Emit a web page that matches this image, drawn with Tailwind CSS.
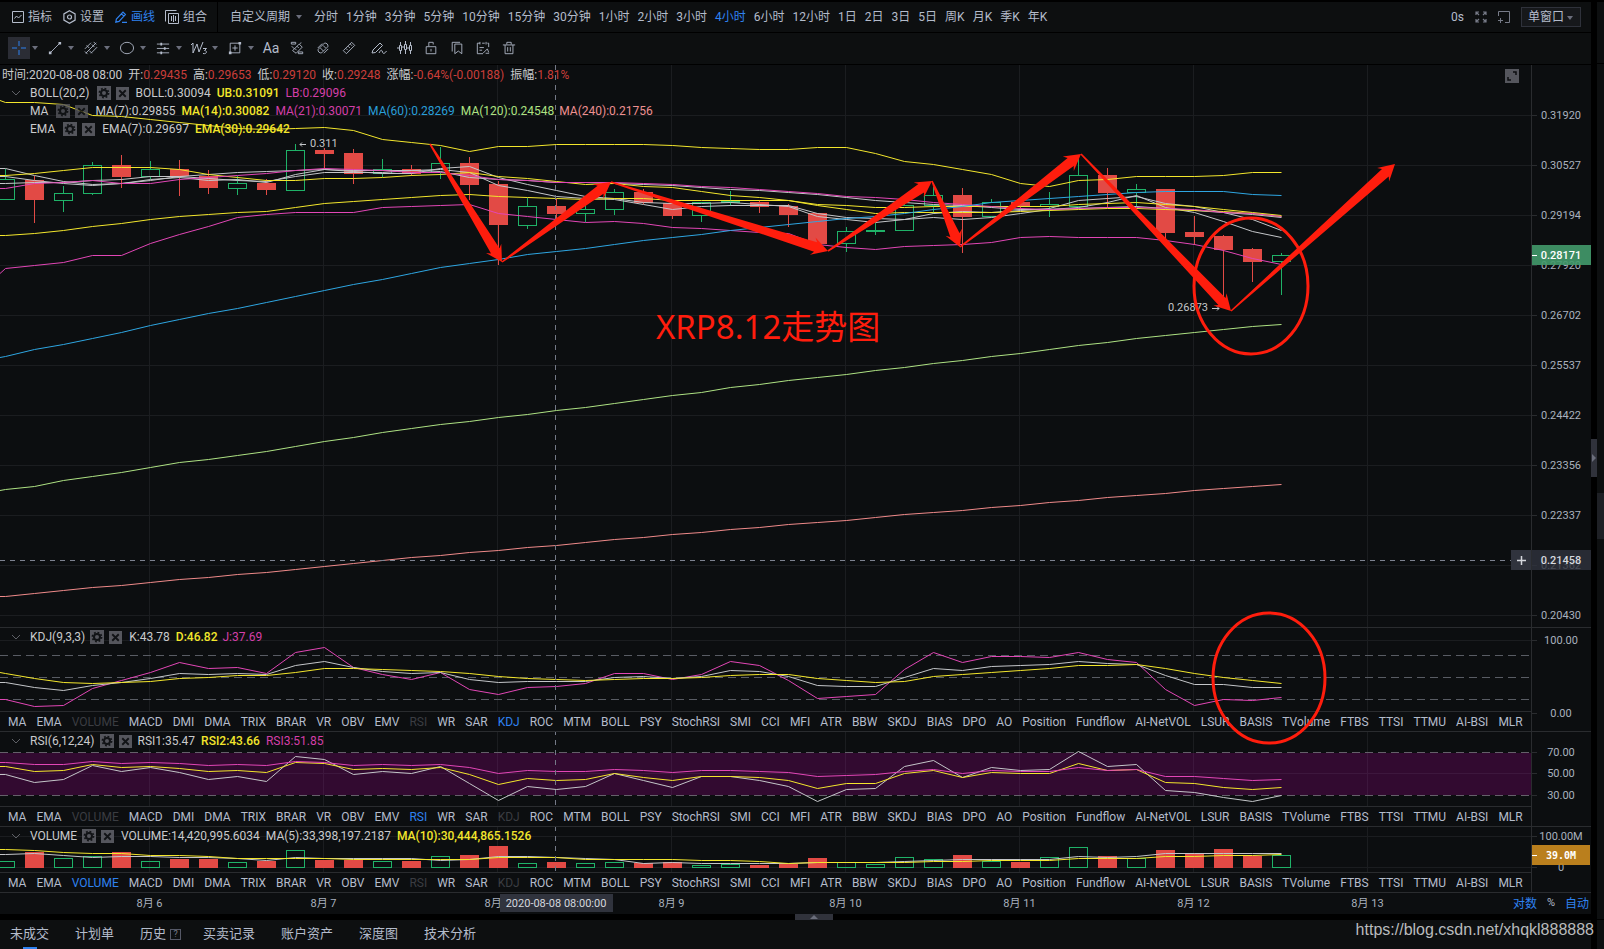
<!DOCTYPE html>
<html lang="zh-CN">
<head>
<meta charset="utf-8">
<title>XRP K线图</title>
<script src="https://cdn.jsdelivr.net/npm/@tailwindcss/browser@4"></script>
</head>
<body class="bg-black">
<svg width="0" height="0" class="absolute" aria-hidden="true">
  <defs>
    <symbol id="gear" viewBox="0 0 14 14"><rect width="14" height="14" fill="#55565d"/><g fill="none" stroke="#111316"><circle cx="7" cy="7" r="3" stroke-width="2"/><circle cx="7" cy="7" r="4.6" stroke-width="1.6" stroke-dasharray="1.8 1.8"/></g></symbol>
    <symbol id="cross" viewBox="0 0 14 14"><rect width="14" height="14" fill="#55565d"/><path d="M3.5 3.5l7 7M10.5 3.5l-7 7" stroke="#111316" stroke-width="2" fill="none"/></symbol>
    <symbol id="chev" viewBox="0 0 10 6"><path d="M1 1l4 4 4-4" fill="none" stroke="#5e6066"/></symbol>
    <symbol id="down" viewBox="0 0 6 4"><path d="M0 0h6l-3 4z" fill="#6b6e7c"/></symbol>
  </defs>
</svg>

<div class="relative flex h-screen min-h-[949px] w-full gap-[6px] overflow-hidden bg-black font-[Roboto,'Noto_Sans_CJK_SC',sans-serif] text-xs text-[#b4bccb]">

  <div class="flex min-w-0 flex-1 flex-col pt-[2px]">
    <!-- period bar -->
    <header class="flex h-[30px] shrink-0 items-stretch bg-[#0d0f10]">
      <div class="flex items-center gap-[11px] border-r border-black pl-3 pr-[10px] whitespace-nowrap">
        <button class="flex items-center gap-1"><svg class="size-3" viewBox="0 0 12 12" fill="none" stroke="currentColor"><path d="M.5.5h11v11H.5zM2.500 7.500l2-2.500 2 2 3-3"/></svg>指标</button>
        <button class="flex items-center gap-1"><svg class="h-[14px] w-[13px]" viewBox="0 0 13 14" fill="none" stroke="currentColor" stroke-width="1.200"><path d="M6.500.7l5.600 3.200v6.200L6.500 13.300.9 10.100V3.900z"/><circle cx="6.500" cy="7" r="2"/></svg>设置</button>
        <button class="flex items-center gap-1 text-[#2f82f0]"><svg class="size-3" viewBox="0 0 12 12" fill="none" stroke="currentColor" stroke-width="1.200"><path d="M.8 11.200l.6-3.200L8 1.200l2.400 2.400L4 10.400zM6.500 2.800l2.400 2.400M7 11.400h5"/></svg>画线</button>
        <button class="-ml-px flex items-center gap-1"><svg class="size-[14px]" viewBox="0 0 14 14" fill="none" stroke="currentColor"><path d="M.5 11.500v-11h11M3.500 3.500h10v10h-10zM6.500 6v5M8.500 5v7M10.500 6v5"/></svg>组合</button>
      </div>
      <nav id="periods" class="flex min-w-0 flex-1 items-center gap-2 overflow-hidden pl-3 whitespace-nowrap">
        <button class="flex items-center gap-[6px] pr-1">自定义周期<svg class="h-1 w-[6px]"><use href="#down"/></svg></button>
      </nav>
      <div class="flex items-center gap-[11px] pr-[10px] whitespace-nowrap">
        <span>0s</span>
        <button aria-label="全屏"><svg class="size-3" viewBox="0 0 12 12" fill="none" stroke="#777b88" stroke-width="1.200"><path d="M1 4V1h3M1 1l3 3M8 1h3v3M11 1L8 4M1 8v3h3M1 11l3-3M11 8v3H8M11 11L8 8"/></svg></button>
        <button aria-label="新窗口"><svg class="size-3" viewBox="0 0 12 12" fill="none" stroke="#777b88"><path d="M.5 5V.5h11v11H7M2.500 7v5M0 9.500h5"/></svg></button>
        <div class="relative">
          <label for="win" class="sr-only">窗口</label>
          <select id="win" class="h-5 w-[60px] appearance-none border border-[#2f323b] bg-[#16181b] pl-[6px] text-xs leading-[18px] text-[#b4bccb]"><option>单窗口</option></select>
          <svg class="pointer-events-none absolute top-[9px] right-[8px] h-1 w-[6px]"><use href="#down"/></svg>
        </div>
      </div>
    </header>

    <!-- drawing tools -->
    <div id="tools" class="mt-px flex h-[31px] shrink-0 items-center gap-1 bg-[#0d0f10] pb-px pl-2"></div>

    <!-- main price chart -->
    <section class="mt-px flex min-h-0 flex-1 border-b border-[#2a2c2f] bg-[#0c0e10]">
      <div class="relative min-w-0 flex-1">
        <svg id="price" class="absolute inset-0 h-full w-full"></svg>
        <div class="relative pt-px leading-[18px] whitespace-nowrap text-[#c9cacc]">
          <div class="flex gap-[6px] pl-[2px]">
            <span>时间:2020-08-08 08:00</span>
            <span>开:<b class="font-normal text-[#cb3e3a]">0.29435</b></span>
            <span>高:<b class="font-normal text-[#cb3e3a]">0.29653</b></span>
            <span>低:<b class="font-normal text-[#cb3e3a]">0.29120</b></span>
            <span>收:<b class="font-normal text-[#cb3e3a]">0.29248</b></span>
            <span>涨幅:<b class="font-normal text-[#cb3e3a]">-0.64%(-0.00188)</b></span>
            <span>振幅:<b class="font-normal text-[#cb3e3a]">1.81%</b></span>
          </div>
          <div class="flex items-center gap-[6px] pl-[11px]">
            <button class="mr-[3px]" aria-label="收起"><svg class="h-[6px] w-[10px]"><use href="#chev"/></svg></button>
            <span>BOLL(20,2)</span>
            <button class="ml-px" aria-label="设置"><svg class="size-[14px]"><use href="#gear"/></svg></button>
            <button aria-label="关闭" class="-ml-px"><svg class="size-[13px]"><use href="#cross"/></svg></button>
            <span class="ml-px">BOLL:0.30094</span><span class="font-medium text-[#f3e62c]">UB:0.31091</span><span class="text-[#d43fa9]">LB:0.29096</span>
          </div>
          <div class="flex items-center gap-[6px] pl-[30px]">
            <span>MA</span>
            <button class="ml-[2px]" aria-label="设置"><svg class="size-[14px] opacity-80"><use href="#gear"/></svg></button>
            <button aria-label="关闭" class="-ml-px"><svg class="size-[13px] opacity-80"><use href="#cross"/></svg></button>
            <span class="ml-px">MA(7):0.29855</span><span class="font-medium text-[#f3e62c]">MA(14):0.30082</span><span class="text-[#d43fa9]">MA(21):0.30071</span><span class="text-[#2a9ed8]">MA(60):0.28269</span><span class="text-[#aee283]">MA(120):0.24548</span><span class="-ml-px text-[#ee9090]">MA(240):0.21756</span>
          </div>
          <div class="flex items-center gap-[6px] pl-[30px]">
            <span>EMA</span>
            <button class="ml-[2px]" aria-label="设置"><svg class="size-[14px]"><use href="#gear"/></svg></button>
            <button aria-label="关闭" class="-ml-px"><svg class="size-[13px]"><use href="#cross"/></svg></button>
            <span class="ml-px">EMA(7):0.29697</span><span class="font-medium text-[#f3e62c]">EMA(30):0.29642</span>
          </div>
        </div>
        <button aria-label="放大" class="absolute top-1 right-3"><svg class="size-[14px]" viewBox="0 0 14 14"><rect width="14" height="14" fill="#55565d"/><path d="M8 3h3v3M3 8v3h3" fill="none" stroke="#0c0e10" stroke-width="1.500"/></svg></button>
        <button aria-label="添加" class="absolute top-[485px] right-0 flex size-5 items-center justify-center bg-[#30333d]"><svg class="size-[9px]" viewBox="0 0 9 9"><path d="M4.500 0v9M0 4.500h9" stroke="#d5d8de" stroke-width="1.500"/></svg></button>
      </div>
      <svg id="priceAxis" class="w-[60px] shrink-0 border-l border-[#2a2c2f]"></svg>
    </section>

    <!-- KDJ -->
    <section class="flex shrink-0 border-b border-[#2a2c2f] bg-[#0c0e10]">
      <div class="min-w-0 flex-1">
        <div class="relative h-[84px] border-b border-[#2a2c2f]">
          <svg id="kdj" class="absolute inset-0 h-full w-full"></svg>
          <div class="relative flex items-center gap-[6px] pl-[11px] leading-[18px] whitespace-nowrap text-[#c9cacc]">
            <button class="mr-[3px]" aria-label="收起"><svg class="h-[6px] w-[10px]"><use href="#chev"/></svg></button>
            <span>KDJ(9,3,3)</span>
            <button class="-ml-px" aria-label="设置"><svg class="size-[14px]"><use href="#gear"/></svg></button>
            <button aria-label="关闭" class="-ml-px"><svg class="size-[13px]"><use href="#cross"/></svg></button>
            <span class="ml-px">K:43.78</span><span class="font-medium text-[#f3e62c]">D:46.82</span><span class="-ml-px text-[#d43fa9]">J:37.69</span>
          </div>
        </div>
        <nav class="flex h-[19px] items-center gap-[10px] overflow-hidden pl-2 whitespace-nowrap" data-on="KDJ" data-off="VOLUME,RSI"></nav>
      </div>
      <svg id="kdjAxis" class="h-[103px] w-[60px] shrink-0 border-l border-[#2a2c2f]"></svg>
    </section>

    <!-- RSI -->
    <section class="flex shrink-0 border-b border-[#2a2c2f] bg-[#0c0e10]">
      <div class="min-w-0 flex-1">
        <div class="relative h-[75px] border-b border-[#2a2c2f]">
          <svg id="rsi" class="absolute inset-0 h-full w-full"></svg>
          <div class="relative flex items-center gap-[6px] pl-[11px] leading-[18px] whitespace-nowrap text-[#c9cacc]">
            <button class="mr-[3px]" aria-label="收起"><svg class="h-[6px] w-[10px]"><use href="#chev"/></svg></button>
            <span>RSI(6,12,24)</span>
            <button class="-ml-px" aria-label="设置"><svg class="size-[14px]"><use href="#gear"/></svg></button>
            <button aria-label="关闭" class="-ml-px"><svg class="size-[13px]"><use href="#cross"/></svg></button>
            <span>RSI1:35.47</span><span class="font-medium text-[#f3e62c]">RSI2:43.66</span><span class="text-[#d43fa9]">RSI3:51.85</span>
          </div>
        </div>
        <nav class="flex h-[19px] items-center gap-[10px] overflow-hidden pl-2 whitespace-nowrap" data-on="RSI" data-off="VOLUME,KDJ"></nav>
      </div>
      <svg id="rsiAxis" class="h-[94px] w-[60px] shrink-0 border-l border-[#2a2c2f]"></svg>
    </section>

    <!-- volume -->
    <section class="flex shrink-0 border-b border-[#2a2c2f] bg-[#0c0e10]">
      <div class="min-w-0 flex-1">
        <div class="relative h-[46px] border-b border-[#2a2c2f]">
          <svg id="vol" class="absolute inset-0 h-full w-full"></svg>
          <div class="relative flex items-center gap-[6px] pl-[11px] leading-[18px] whitespace-nowrap text-[#c9cacc]">
            <button class="mr-[3px]" aria-label="收起"><svg class="h-[6px] w-[10px]"><use href="#chev"/></svg></button>
            <span>VOLUME</span>
            <button class="-ml-px" aria-label="设置"><svg class="size-[14px]"><use href="#gear"/></svg></button>
            <button aria-label="关闭" class="-ml-px"><svg class="size-[13px]"><use href="#cross"/></svg></button>
            <span class="ml-px">VOLUME:14,420,995.6034</span><span>MA(5):33,398,197.2187</span><span class="font-medium text-[#f3e62c]">MA(10):30,444,865.1526</span>
          </div>
        </div>
        <nav class="flex h-[19px] items-center gap-[10px] overflow-hidden pl-2 whitespace-nowrap" data-on="VOLUME" data-off="RSI,KDJ"></nav>
      </div>
      <svg id="volAxis" class="h-[65px] w-[60px] shrink-0 border-l border-[#2a2c2f]"></svg>
    </section>

    <!-- time axis -->
    <div class="flex h-[21px] shrink-0 items-center bg-[#0c0e10]">
      <svg id="time" class="h-full min-w-0 flex-1"></svg>
      <div class="flex items-center gap-[10px] pr-[2px] whitespace-nowrap text-[#2f82f0]"><button>对数</button><button class="text-[11px] text-[#b4bccb]">%</button><button>自动</button></div>
    </div>
    <div class="flex h-[6px] shrink-0 justify-center"><button aria-label="展开面板" class="mr-[-37px] flex w-[38px] items-center justify-center bg-[#30323b]"><svg class="h-1 w-2" viewBox="0 0 8 4"><path d="M0 4l4-4 4 4z" fill="#6b6e7c"/></svg></button></div>

    <!-- order tabs -->
    <footer class="flex h-[29px] shrink-0 items-stretch gap-[26px] bg-[#0d0f10] pb-px pl-[10px] text-[13px] whitespace-nowrap">
      <button class="relative">未成交<span class="absolute -bottom-px left-[13px] h-[2px] w-[14px] bg-[#2f82f0]"></span></button>
      <button>计划单</button>
      <button class="-mr-[4px] flex items-center gap-1">历史<span class="flex h-[11px] w-[11px] items-center justify-center border border-[#555866] text-[9px] leading-none text-[#777b88]">?</span></button>
      <button>买卖记录</button>
      <button>账户资产</button>
      <button>深度图</button>
      <button>技术分析</button>
    </footer>
  </div>

  <!-- collapsed side panel -->
  <aside class="flex w-[7px] shrink-0 flex-col pt-[2px]">
    <div class="h-[61px] bg-[#0d0f10]"></div>
    <div class="mt-px flex-1 bg-[#0d0f10] pt-[429px]"><div class="h-[46px] bg-[#1e2025]"></div></div>
    <div class="mt-px h-[29px] bg-[#0d0f10]"></div>
  </aside>
  <button aria-label="展开侧栏" class="absolute top-[439px] right-[7px] flex h-[38px] w-[6px] items-center justify-center bg-[#30323b]"><svg class="h-2 w-1" viewBox="0 0 4 8"><path d="M0 0l4 4-4 4z" fill="#6b6e7c"/></svg></button>

  <!-- hand-drawn notes over the chart -->
  <svg id="notes" class="pointer-events-none absolute inset-0 h-full w-full" fill="none"></svg>
  <a href="https://blog.csdn.net/xhqkl888888" class="absolute right-[10px] bottom-[7px] font-['Liberation_Sans',sans-serif] text-base leading-6 text-[#b9bbbd]">https://blog.csdn.net/xhqkl888888</a>
</div>

<script>
const UP = '#1fb268', DOWN = '#e24a45', W = '#c4c6c9', Y = '#f3e62c', P = '#e246b6', B = '#2ea6e2', G = '#aee283', S = '#f08a8a', GRID = '#1b1d20';
const X = i => 5.5 + 29 * i;
const $ = id => document.getElementById(id);

/* period buttons */
$('periods').insertAdjacentHTML('beforeend', '分时 1分钟 3分钟 5分钟 10分钟 15分钟 30分钟 1小时 2小时 3小时 4小时 6小时 12小时 1日 2日 3日 5日 周K 月K 季K 年K'.split(' ')
  .map(t => `<button class="${t === '4小时' ? 'text-[#2f82f0]' : ''}">${t}</button>`).join(''));

/* drawing tools */
const ico = {
  line: '<path d="M3 13L13 3"/><path d="M1 12h3v3H1zM12 1h3v3h-3z" fill="currentColor" stroke="none"/>',
  pitch: '<path d="M1 9L8 2M2 14L14 2M8 14l7-7M3 5l3 3M6 11l3 3M9 4l3 3M1 12l3 3M11 1l3 3"/>',
  oval: '<ellipse cx="8" cy="8" rx="7.500" ry="6.500"/>',
  levels: '<path d="M1 3.500h14M1 8.500h14M1 13.500h14"/><path d="M5 2h2v3H5zM9 7h2v3H9zM5 12h2v3H5z" fill="currentColor" stroke="none"/>',
  range: '<path d="M2.500 2.500h11v11h-11zM8 5v6M5 8h6"/><path d="M1 12h3v3H1zM12 1h3v3h-3z" fill="currentColor" stroke="none"/>',
  rulers: '<path d="M1.500 1.500h5v2h-5zM9.500 12.500h5v2h-5zM3 11l7.500-7.500 3.500 3.500-7 7zM5.500 8.500l2 2M8 6l2 2M2 6l3 3M11 3l2-1"/>',
  magnet: '<path d="M2.500 9.500l7-7a3.200 3.200 0 014 4l-7 7a3.200 3.200 0 01-4-4zM5 8l3.500 3.500M8 5l3 3M2 8l5-5M9 14l5-5"/>',
  ruler: '<path d="M1.500 11L11 1.500 14.500 5 5 14.500zM4.500 8.500l2 2M7 6l2 2M9.500 3.500l2 2"/>',
  pen: '<path d="M1 13l1-3 7-7 2.500 2.500-7 7zM8 13c2-4 3-3 3.500-1S13.500 14 15.500 11"/>',
  bars: '<path d="M2.500 5.500h2v5h-2zM7.500 4.500h2v5h-2zM12.500 5.500h2v5h-2zM3.500 2v3M3.500 11v3M8.500 1v3M8.500 10v4M13.500 2v3M13.500 11v3M0 8h2M5 7h2M10 8h2"/>',
  lock: '<path d="M2.500 6.500h11v8h-11zM5.500 6V1.500h5V4M8 9v3"/>',
  mark: '<path d="M2.500 12V1.500h9M5.500 3.500h8v11l-4-3-4 3z"/>',
  note: '<path d="M8 14.500H1.500v-12h3M7 2.500h3M13 2.500h1.500V7M4.500 1v3M11.500 1v3M4 7.500h5M4 10.500h3M8 14l5-5 1.500 4M11 14h4"/>',
  trash: '<path d="M1 4.500h14M5.500 4V1.500h5V4M3.500 4.500v10h9v-10M6.500 7v5M9.500 7v5"/>'
};
const svgI = k => `<svg class="size-[14px]" viewBox="0 0 16 16" fill="none" stroke="currentColor">${ico[k]}</svg>`;
const menu = (inner, on) => `<div class="flex items-center gap-px"><button class="${on ? 'flex h-[22px] w-[22px] items-center justify-center bg-[#2b2d35] text-[#2f82f0]' : 'flex h-[22px] w-[22px] items-center justify-center'}">${inner}</button><button aria-label="更多" class="mr-px flex w-2 justify-center"><svg class="h-1 w-[6px]"><use href="#down"/></svg></button></div>`;
const solo = inner => `<button class="flex h-[22px] w-[22px] items-center justify-center">${inner}</button>`;
$('tools').innerHTML =
  menu('<svg class="size-[14px]" viewBox="0 0 14 14" stroke="currentColor"><path d="M7 0v5M7 9v5M0 7h5M9 7h5"/></svg>', true) +
  menu(svgI('line')) + menu(svgI('pitch')) + menu(svgI('oval')) + menu(svgI('levels')) +
  menu('<svg class="h-[14px] w-[18px]" viewBox="0 0 18 14" fill="none" stroke="currentColor"><path d="M1 4l2-2v10L7 3l2 8 4-10M13 7.500h3.500l-2 2c3 0 2.500 4-1.500 3"/></svg>') +
  menu(svgI('range')) +
  solo('<span class="text-[14px]">Aa</span>') + solo(svgI('rulers')) + solo(svgI('magnet')) + solo(svgI('ruler')) +
  `<button class="flex h-[22px] w-[30px] items-center justify-center"><svg class="size-4" viewBox="0 0 16 16" fill="none" stroke="currentColor">${ico.pen}</svg></button>` +
  `<button class="-ml-1 flex h-[22px] w-[22px] items-center justify-center"><svg class="size-4" viewBox="0 0 16 16" fill="none" stroke="currentColor">${ico.bars}</svg></button>` +
  ['lock', 'mark', 'note', 'trash'].map(k => solo(svgI(k))).join('');

/* indicator tabs */
const tabs = 'MA EMA VOLUME MACD DMI DMA TRIX BRAR VR OBV EMV RSI WR SAR KDJ ROC MTM BOLL PSY StochRSI SMI CCI MFI ATR BBW SKDJ BIAS DPO AO Position Fundflow AI-NetVOL LSUR BASIS TVolume FTBS TTSI TTMU AI-BSI MLR'.split(' ');
document.querySelectorAll('nav[data-on]').forEach(n => {
  n.innerHTML = tabs.map(t => `<button class="${t === n.dataset.on ? 'text-[#2f82f0]' : n.dataset.off.split(',').includes(t) ? 'text-[#3b3d42]' : ''}">${t}</button>`).join('');
});

/* svg helpers */
const rule = (x1, y1, x2, y2, c, d) => `<line x1="${x1}" y1="${y1}" x2="${x2}" y2="${y2}" stroke="${c}" ${d ? `stroke-dasharray="${d}"` : ''}/>`;
const days = [149.5, 323.5, 497.5, 671.5, 845.5, 1019.5, 1193.5, 1367.5];
const vgrid = c => days.map(x => rule(x, 0, x, '100%', c || GRID)).join('');
const hgrid = ys => ys.map(y => rule(0, y + .5, '100%', y + .5, GRID)).join('');
const path = (c, s, lead) => {
  const v = s.trim().split(/\s+/).map(Number);
  return `<polyline fill="none" stroke="${c}" points="${lead ? `0,${lead + .5} ` : `0,${v[0] + .5} `}${v.map((y, i) => X(i) + ',' + (y + .5)).join(' ')}"/>`;
};
const cursor = y0 => rule(555.5, y0, 555.5, '100%', '#747987', '5 5');

/* price pane, origin at y = 65 */
const candles = `g179,199,169,199 r180,200,176,223 g193,200,186,212 g165,193,162,195 r165,177,155,188 g169,176,161,179 r169,176,160,196 r176,188,170,194 g183,188,176,195 r183,190,179,195 g150,190,144,190 r150,154,148,169 r153,174,149,184 g169,173,159,177 r169,174,165,176 g163,172,147,179 r163,185,157,200 r184,225,181,265 g206,225,198,229 r206,214,199,219 g209,213,205,222 g192,209,189,215 r192,203,189,204 r203,216,203,219 g202,215,202,222 g201,202,191,206 r202,207,200,213 r206,215,204,227 r213,244,213,244 g231,243,227,252 g230,231,223,235 g205,230,203,230 g195,205,187,214 r195,217,188,253 g202,216,199,217 r202,206,202,210 g204,206,192,217 g175,206,159,206 r175,193,168,208 g189,192,184,207 r189,233,189,247 r232,237,216,245 r236,250,235,297 r249,262,248,282 g255,261,253,295`
  .split(' ').map((s, i) => {
    const [a, b, h, l] = s.slice(1).split(',').map(Number), c = s[0] === 'g' ? UP : DOWN, x = X(i);
    return rule(x, h, x, a, c) + rule(x, b, x, l, c) +
      (s[0] === 'g' ? `<rect x="${x - 9}" y="${a + .5}" width="18" height="${b - a}" fill="none" stroke="${c}"/>` : `<rect x="${x - 9.5}" y="${a}" width="19" height="${b - a}" fill="${c}"/>`);
  }).join('');
$('price').innerHTML = vgrid() + hgrid([50, 100, 150, 200, 250, 300, 350, 400, 450, 500, 550]) + '<g transform="translate(0,-65)">' + candles +
  path(W, '168 175 181 184 183 179 177 180 179 182 174 169 171 173 173 168 166 177 184 190 196 198 202 203 203 202 204 206 216 219 222 219 213 211 212 210 208 200 198 196 203 206 212 219 230') +
  path(W, '183 182 182 180 179 176 176 174 172 171 170 169 170 170 170 171 177 179 180 182 182 183 184 185 187 189 190 192 194 197 200 202 204 205 207 209 209 208 207 206 208 210 212 214 217') +
  path(W, '176 180 183 185 183 180 176 178 180 181 176 172 172 172 170 169 172 185 190 196 198 199 204 209 206 205 205 205 213 217 218 219 217 219 217 213 209 207 202 195 207 212 221 231 237') +
  path(Y, '102 102 104 115 116 119 122 125 128 129 128 127 130 139 142 145 151 146 146 144 144 144 144 145 147 148 149 149 147 147 153 161 164 169 174 183 186 180 179 176 176 176 175 172 172', 100) +
  path(Y, '235 233 230 226 223 219 216 214 212 211 207 203 201 199 197 195 194 196 197 198 199 198 198 200 200 200 200 200 204 205 207 207 206 206 206 206 206 204 203 202 204 206 209 212 215') +
  path(Y, '175 173 170 167 167 167 169 174 177 180 180 178 178 177 175 174 172 176 178 181 184 183 186 187 191 195 197 200 205 209 213 212 212 212 212 211 210 209 208 208 209 210 211 213 216') +
  path(P, '188 183 182 180 183 183 179 177 175 173 170 168 169 170 172 172 175 179 180 182 182 182 183 184 186 187 189 191 193 196 197 199 202 204 206 208 209 208 207 207 208 209 212 213 216') +
  path(P, '268 265 262 255 255 243 234 226 217 214 212 212 212 207 206 205 204 213 216 219 222 221 223 227 228 230 232 233 244 247 249 246 245 244 242 237 236 237 237 237 240 244 250 258 264', 273) +
  path(B, '356 349 344 338 332 325 319 313 308 302 296 290 284 279 273 267 263 259 254 251 248 244 240 237 234 230 227 224 221 218 216 213 209 206 202 200 198 196 194 192 191 191 191 194 195', 357) +
  path(G, '489 486 480 476 472 467 462 459 455 451 446 441 437 432 428 424 421 417 414 410 407 403 399 395 392 387 384 380 377 374 370 367 363 360 356 353 349 345 342 338 335 332 329 326 324', 490) +
  path(S, '596 593 590 587 585 582 579 577 574 572 569 566 563 560 557 555 552 550 547 545 542 539 537 534 532 529 527 524 522 520 517 514 512 510 507 505 502 500 497 495 493 490 488 486 484') +
  `<g fill="${W}" font-size="11"><text x="310" y="147">0.311</text><path d="M306 144.500h-6m2-2l-2 2 2 2" fill="none" stroke="${W}"/><text x="1168" y="311">0.26873</text><path d="M1212 308.500h7m-2-2l2 2-2 2" fill="none" stroke="${W}"/></g></g>` +
  cursor(0) + rule(0, 495.5, '100%', 495.5, '#7d8290', '5 5');

/* value axes */
const tick = (y, t) => rule(0, y + .5, 5, y + .5, '#2a2c2f') + `<text x="29" y="${y + 4}" text-anchor="middle">${t}</text>`;
const axis = (id, list, extra) => $(id).innerHTML = `<g fill="#a9b1be" font-size="11">${list.map(a => tick(a[0], a[1])).join('')}</g>` + (extra || '');
axis('priceAxis', [[50, '0.31920'], [100, '0.30527'], [150, '0.29194'], [200, '0.27920'], [250, '0.26702'], [300, '0.25537'], [350, '0.24422'], [400, '0.23356'], [450, '0.22337'], [500, '0.21362'], [550, '0.20430']],
  `<rect y="180" width="60" height="20" fill="#429a6c" fill-opacity=".9"/><path d="M0 190.500h5" stroke="#fff"/><text x="29" y="194" text-anchor="middle" fill="#fff" font-size="11" font-weight="500">0.28171</text>
   <rect y="485" width="60" height="20" fill="#30333d" fill-opacity=".8"/><text x="29" y="499" text-anchor="middle" fill="#d5d8de" font-size="11" font-weight="500">0.21458</text>`);
axis('kdjAxis', [[12, '100.00'], [85, '0.00']]);
axis('rsiAxis', [[20, '70.00'], [41, '50.00'], [63, '30.00']]);
axis('volAxis', [[9, '100.00M'], [40, '0']],
  `<rect y="18" width="58" height="20" fill="#c4861f" fill-opacity=".95"/><path d="M0 28.500h5" stroke="#fff"/><text x="29" y="32" text-anchor="middle" fill="#fff" font-size="10" font-weight="700" font-family="DejaVu Sans Mono">39.0M</text>`);

/* KDJ pane, origin at y = 628 */
const DASH = '8 5';
$('kdj').innerHTML = vgrid() + hgrid([12]) + [27.5, 49.5, 71.5].map(y => rule(0, y, '100%', y, '#595c64', DASH)).join('') + '<g transform="translate(0,-628)">' +
  path(P, '699 706 705 688 680 672 662 668 667 673 652 647 667 674 679 672 689 694 687 686 683 673 673 679 674 661 665 680 698 696 694 669 652 662 656 656 657 652 659 662 689 705 699 700 697') +
  path(W, '682 687 690 685 682 678 673 674 673 674 665 661 667 671 673 672 679 682 681 681 681 677 676 678 676 670 671 676 685 686 686 677 668 670 666 665 664 661 663 664 675 684 684 687 687') +
  path(Y, '673 678 682 683 682 681 678 677 675 675 672 668 668 669 670 671 673 676 678 679 680 679 678 678 677 675 674 674 678 680 682 681 676 674 672 670 668 665 665 664 668 673 677 680 683', 672) + '</g>' + cursor(-3);

/* RSI pane, origin at y = 732 */
$('rsi').innerHTML = vgrid() + '<rect y="21" width="100%" height="42" fill="#320a30"/>' + `<svg y="21" width="100%" height="42">${vgrid('#3d173d')}${rule(0, 20.5, '100%', 20.5, '#3d173d')}</svg>` + [20.5, 63.5].map(y => rule(0, y, '100%', y, '#65606a', DASH)).join('') + '<g transform="translate(0,-732)">' +
  path(W, '774 782 779 765 771 767 772 779 776 781 756 759 774 771 773 766 783 800 786 789 786 773 780 787 776 776 780 786 801 789 788 766 760 777 767 770 769 751 766 764 790 792 797 801 795') +
  path(Y, '766 771 770 764 767 766 768 771 770 772 762 763 769 768 769 767 774 784 778 780 779 773 777 780 776 776 777 780 788 783 783 773 770 777 772 773 773 763 770 769 782 783 787 789 787') +
  path(P, '762 764 764 761 763 762 763 765 764 765 761 762 765 764 765 764 767 773 770 771 771 769 770 772 770 770 771 772 776 775 774 771 769 773 770 771 771 767 770 769 776 776 778 780 779') + '</g>' + cursor(-2);

/* volume pane, origin at y = 827 */
const vols = 'g861 r852 g858 g856 r852 g861 r859 r859 g862 r861 g850 r860 r860 g861 r861 g856 r855 r846 g863 r862 g863 g862 r863 r862 g865 g864 r865 r864 r858 g862 g864 g857 g859 r855 g861 r862 g857 g847 r856 g858 r850 r853 r849 r856 g855'
  .split(' ').map((s, i) => {
    const y = +s.slice(1), x = X(i);
    return s[0] === 'g' ? `<rect x="${x - 9}" y="${y + .5}" width="18" height="${867 - y}" fill="none" stroke="${UP}"/>` : `<rect x="${x - 9.5}" y="${y}" width="19" height="${868 - y}" fill="${DOWN}"/>`;
  }).join('');
$('vol').innerHTML = vgrid() + hgrid([9, 40]) + '<g transform="translate(0,-827)">' + vols +
  path(W, '854 853 855 857 856 856 857 857 858 860 857 858 858 858 858 860 859 856 856 857 858 859 863 862 863 863 863 863 862 862 862 861 860 859 859 859 859 856 857 856 853 853 853 853 853') +
  path(Y, '849 850 852 853 853 855 855 856 858 858 858 858 859 859 859 859 859 857 857 857 859 859 859 859 860 860 861 863 862 862 862 862 861 861 860 860 860 858 858 858 856 856 855 855 854') + '</g>' + cursor(-1);

/* time axis */
$('time').innerHTML = '<g fill="#a9b1be" font-size="11" text-anchor="middle">' + days.map((x, i) => `<text x="${x}" y="14">8月 ${6 + i}</text>`).join('') +
  '<rect x="500" y="1" width="113" height="18" fill="#30333d"/><text x="556" y="14" fill="#d5d8de">2020-08-08 08:00:00</text></g>';

/* notes */
const pts = [[430, 144], [502, 262], [611, 182], [828, 251], [932, 181], [960, 247], [1081, 154], [1231, 311], [1395, 164]];
const arrow = ([x1, y1], [x2, y2]) => {
  const L = Math.hypot(x2 - x1, y2 - y1), ux = (x2 - x1) / L, uy = (y2 - y1) / L;
  const at = (a, n) => `${(x1 + ux * a - uy * n).toFixed(1)},${(y1 + uy * a + ux * n).toFixed(1)}`;
  return `<polygon fill="#ff1d0d" points="${[at(0, .8), at(L - 13, 5), at(L - 16, 9), at(L, 0), at(L - 16, -9), at(L - 13, -5), at(0, -.8)].join(' ')}"/>`;
};
$('notes').innerHTML = pts.slice(1).map((p, i) => arrow(pts[i], p)).join('') +
  `<g stroke="#ff1d0d" stroke-width="3"><ellipse cx="1251" cy="286" rx="57" ry="68"/><ellipse cx="1269" cy="678" rx="56" ry="65"/></g>
   <text x="656" y="339" fill="#ff1d0d" font-size="33" font-family="'Noto Sans','Noto Sans CJK SC',sans-serif">XRP8.12走势图</text>`;
</script>
</body>
</html>
